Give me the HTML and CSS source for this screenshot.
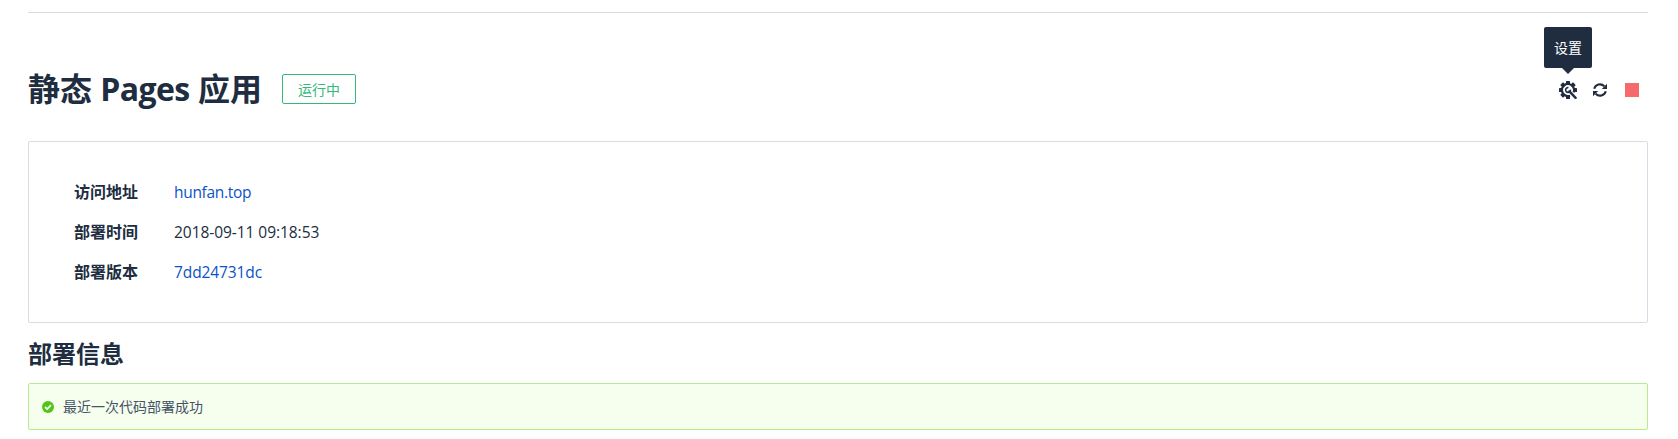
FILE: index.html
```html
<!DOCTYPE html>
<html lang="zh-CN">
<head>
<meta charset="utf-8">
<title>静态 Pages 应用</title>
<link rel="stylesheet" href="styles.css">
</head>
<body>
<main class="page">
  <header class="header">
    <h1 class="title">静态 <span class="latin">Pages</span> 应用</h1>
    <span class="status">运行中</span>
    <div class="actions">
      <div class="action">
        <div class="tooltip">设置</div>
        <svg class="gear" viewBox="0 0 18 18" width="18" height="18">
          <g fill="#202d40">
            <rect x="7" y="0" width="4" height="4" rx=".5"/>
            <rect x="7" y="14" width="4" height="4" rx=".5"/>
            <rect x="0" y="7" width="4" height="4" rx=".5"/>
            <rect x="14" y="7" width="4" height="4" rx=".5"/>
            <rect x="7" y="0" width="4" height="4" rx=".5" transform="rotate(45 9 9)"/>
            <rect x="7" y="0" width="4" height="4" rx=".5" transform="rotate(-45 9 9)"/>
            <rect x="7" y="0" width="4" height="4" rx=".5" transform="rotate(-135 9 9)"/>
          </g>
          <path d="M14.6 11.4A6.1 6.1 0 1 0 11 14.8" fill="none" stroke="#202d40" stroke-width="2.2"/>
          <path d="M10.4 10.4L16.6 16.8" stroke="#202d40" stroke-width="2.4" stroke-linecap="round"/>
          <path d="M9.4 6.6A2.4 2.4 0 1 0 11.4 8.6" fill="none" stroke="#202d40" stroke-width="1.6"/>
        </svg>
      </div>
      <svg class="refresh" viewBox="0 0 14 14" width="14" height="14">
        <path d="M1.2 5.8A6 6 0 0 1 11.3 3.2M12.8 8.2A6 6 0 0 1 2.7 10.8" fill="none" stroke="#202d40" stroke-width="2.1"/>
        <path d="M14 .8V6H8.8ZM0 13.2V8H5.2Z" fill="#202d40"/>
      </svg>
      <span class="stop"></span>
    </div>
  </header>
  <dl class="info">
    <dt>访问地址</dt><dd class="link host">hunfan.top</dd>
    <dt>部署时间</dt><dd class="time">2018-09-11 09:18:53</dd>
    <dt>部署版本</dt><dd class="link hash">7dd24731dc</dd>
  </dl>
  <h2 class="subtitle">部署信息</h2>
  <div class="alert">
    <svg viewBox="0 0 12 12" width="12" height="12"><circle cx="6" cy="6" r="6" fill="#52c41a"/><path d="M3 6L5.2 8.1L9 4.2" fill="none" stroke="#f6ffed" stroke-width="1.8"/></svg>
    <span class="message">最近一次代码部署成功</span>
  </div>
</main>
</body>
</html>
```
FILE: styles.css
```css
* { box-sizing: border-box; }
body {
  margin: 0;
  background: #fff;
  color: #202d40;
  font-family: "Open Sans", "Noto Sans CJK SC", sans-serif;
}
.page {
  margin: 12px 30px 0 28px;
  border-top: 1px solid #d3dae3;
}
.header {
  display: flex;
  align-items: center;
  height: 128px;
  padding: 24px 9px 0 0;
}
.title {
  margin: 0;
  width: 254px;
  font-size: 32px;
  line-height: 48px;
  font-weight: 700;
  white-space: nowrap;
}
.latin { letter-spacing: -.6px; }
.status {
  width: 74px;
  height: 30px;
  border: 1px solid #35b878;
  border-radius: 2px;
  color: #35b878;
  font-size: 14px;
  line-height: 29px;
  font-weight: 400;
  text-align: center;
}
.actions {
  display: flex;
  align-items: center;
  margin-left: auto;
  padding-top: 2px;
}
.action { position: relative; width: 18px; height: 18px; }
.gear, .refresh { display: block; }
.refresh { margin-left: 16px; }
.stop { width: 14px; height: 14px; margin-left: 18px; background: #f66a6c; }
.tooltip {
  position: absolute;
  left: -15px;
  bottom: 31px;
  width: 48px;
  height: 41px;
  border-radius: 2px;
  background: #202d40;
  color: #fff;
  font-size: 14px;
  line-height: 41px;
  text-align: center;
}
.tooltip::after {
  content: "";
  position: absolute;
  left: 18px;
  top: 41px;
  border: 6px solid transparent;
  border-top-color: #202d40;
  border-bottom: 0;
}
.info {
  display: grid;
  grid-template-columns: 100px 1fr;
  grid-auto-rows: 40px;
  height: 182px;
  margin: 0;
  padding: 30px 45px;
  border: 1px solid #d8dce5;
  border-radius: 2px;
  font-size: 16px;
  line-height: 40px;
}
.info dt { font-weight: 600; }
.info dd { margin: 0; font-size: 15.5px; }
.info .host { letter-spacing: -.3px; }
.info .time { letter-spacing: -.05px; }
.info .hash { letter-spacing: -.1px; }
.link { color: #0b52c8; }
.subtitle {
  margin: 0;
  padding: 13px 0 11px;
  font-size: 24px;
  line-height: 36px;
  font-weight: 700;
}
.alert {
  display: flex;
  align-items: center;
  gap: 9px;
  height: 47px;
  padding: 0 13px;
  border: 1px solid #b7eb8f;
  border-radius: 2px;
  background: #f6ffed;
  color: #46536a;
  font-size: 14px;
}
.message { padding-bottom: 2px; }
```
